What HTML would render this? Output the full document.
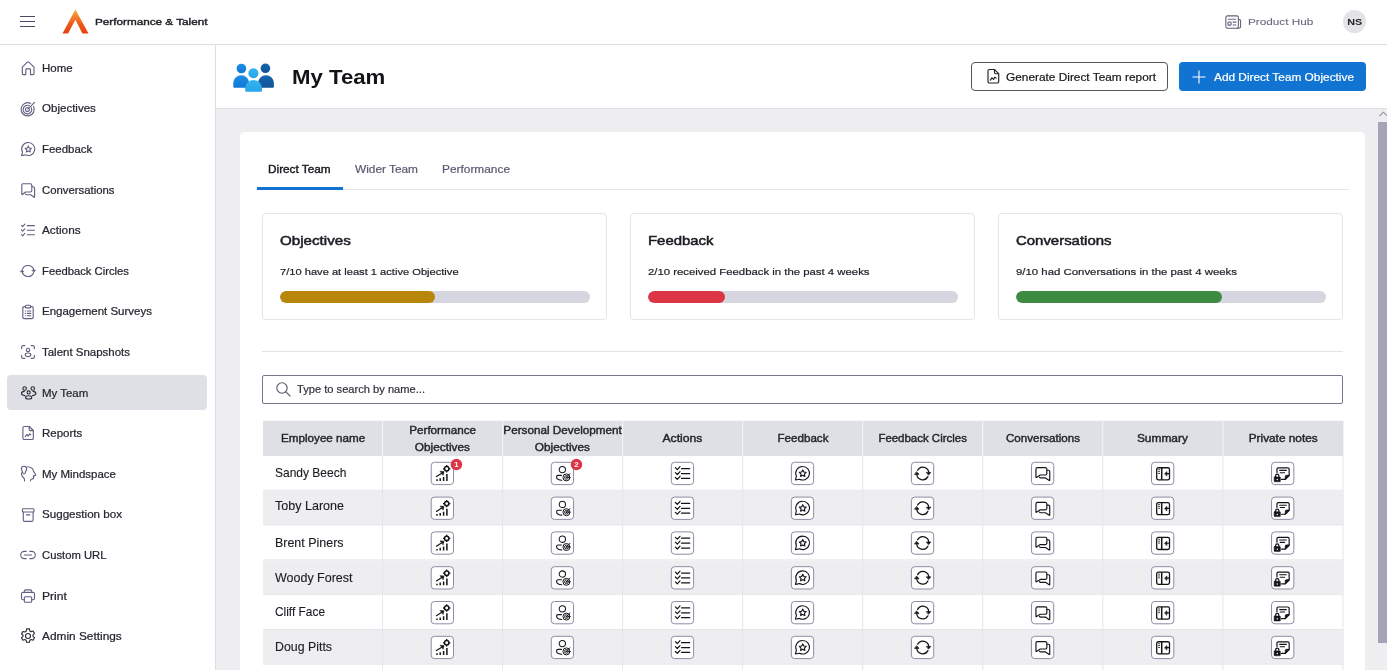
<!DOCTYPE html>
<html>
<head>
<meta charset="utf-8">
<title>My Team</title>
<style>
*{box-sizing:border-box;margin:0;padding:0}
html,body{width:1387px;height:670px;overflow:hidden;background:#fff}
body{font-family:"Liberation Sans",sans-serif;font-size:11.2px;color:#1f1f2b;position:relative}
.abs{position:absolute}
svg{display:block;overflow:visible}
/* top bar */
#topbar{position:absolute;left:0;top:0;width:1387px;height:45px;background:#fff;border-bottom:1px solid #dddde6}
#brand{position:absolute;left:94.7px;top:14.5px;font-size:9.6px;font-weight:400;color:#222228;-webkit-text-stroke:0.4px #222228;white-space:nowrap;line-height:14px}
#phub{position:absolute;left:1247.7px;top:14.6px;font-size:9.6px;color:#6a6a80;-webkit-text-stroke:0.1px;white-space:nowrap;line-height:14px}
#avatar{position:absolute;left:1343px;top:10px;width:23px;height:23px;border-radius:50%;background:#e3e3e8;font-size:10px;font-weight:700;color:#222;text-align:center;line-height:23px}
/* sidebar */
#side{position:absolute;left:0;top:45px;width:216px;height:625px;background:#fff;border-right:1px solid #dddde6}
.nav{position:absolute;left:7px;width:200px;height:34.5px;border-radius:4px}
.nav.sel{background:#dfe0e6;margin-top:-0.8px;height:35px}
.nav.sel svg{top:9.8px}.nav.sel .lb{top:10.8px}
.nav svg{position:absolute;left:12.7px;top:9.2px;width:16px;height:16px}
.nav .lb{position:absolute;left:35px;top:10px;line-height:14px;font-size:11.2px;color:#262630;white-space:nowrap;-webkit-text-stroke:0.22px #262630}
/* page header */
#phead{position:absolute;left:216px;top:45px;width:1171px;height:64px;background:#fff;border-bottom:1px solid #dddde6}
#title{position:absolute;left:292px;top:63px;font-size:21px;font-weight:700;color:#141418;line-height:28px;white-space:nowrap}
.btn{position:absolute;top:62px;height:29px;border-radius:4px;font-size:11.2px;line-height:27px;white-space:nowrap;-webkit-text-stroke:0.18px}
#b1{left:971px;width:197px;border:1px solid #55555f;background:#fff;color:#15151a}
#b2{left:1179px;width:187px;background:#1274d2;color:#fff}
/* content */
#content{position:absolute;left:216px;top:109px;width:1171px;height:561px;background:#eeeef1}
#card{position:absolute;left:240px;top:132px;width:1125px;height:560px;background:#fff;border-radius:4.5px}
.tab{position:absolute;top:162px;line-height:14px;font-size:11.2px;white-space:nowrap;color:#5a5a72;-webkit-text-stroke:0.2px}
#tabline{position:absolute;left:256px;top:189px;width:1093px;height:1px;background:#e4e4ea}
#tabsel{position:absolute;left:256.5px;top:187px;width:86.5px;height:3px;background:#1274d2}
.stat{position:absolute;top:213px;width:345px;height:107px;border:1px solid #e4e4ea;border-radius:4px;background:#fff}
.stat h3{position:absolute;left:16.5px;top:18.7px;font-size:13.3px;line-height:16px;font-weight:400;color:#1c1c24;-webkit-text-stroke:0.5px #1c1c24;white-space:nowrap}
.stat p{position:absolute;left:16.5px;top:51px;font-size:9.7px;line-height:13px;color:#22222c;-webkit-text-stroke:0.2px #22222c;white-space:nowrap}
.bar{position:absolute;left:16.5px;top:77px;width:310px;height:11.6px;border-radius:6px;background:#d6d6e1;overflow:hidden}
.bar i{display:block;height:11.6px;border-radius:6px}
#sep{position:absolute;left:262px;top:351px;width:1081px;height:1px;background:#e2e2e8}
#search{position:absolute;left:262px;top:375px;width:1081px;height:29px;border:1px solid #76768c;border-radius:2px;background:#fff}
#search .lb{position:absolute;left:34px;top:7px;font-size:10.6px;line-height:13px;color:#30303a;-webkit-text-stroke:0.2px;white-space:nowrap}
/* table */
#thead{position:absolute;left:263px;top:421px;width:1080px;height:35px;z-index:2}
.th{position:absolute;top:0;width:120.05px;height:35px;text-align:center;font-weight:400;font-size:10px;color:#24242c;-webkit-text-stroke:0.38px #24242c;line-height:17.2px;padding-top:1.2px;white-space:nowrap;border-left:1px solid transparent}
.th.one{line-height:35.6px;padding-top:0}
.row{position:absolute;left:263px;width:1080px;height:34.75px;background:#fff}
.row.alt{background:#efeff2}
.nm{position:absolute;left:275px;font-size:12.2px;line-height:14px;color:#1b1b22;white-space:nowrap;-webkit-text-stroke:0.12px #1b1b22}
.cell{position:absolute;top:0;width:120.05px;height:100%;border-left:1px solid #e2e2e8}
.ib{position:absolute;left:47.35px;top:5.9px;width:23.3px;height:23.3px;border:1px solid #8c8ca5;border-radius:3.5px;background:#fff}
.ib svg{position:absolute;left:-1px;top:-1px;width:23.3px;height:23.3px}
.badge{position:absolute;left:67.3px;top:2.7px;width:11.5px;height:11.5px;border-radius:50%;background:#dc3545;color:#fff;font-size:8px;font-weight:700;line-height:11.5px;text-align:center}
/* scrollbar */
#sb{position:absolute;left:1378px;top:109px;width:9px;height:561px;background:#eeeef1}
#sbt{position:absolute;left:1378px;top:122px;width:9px;height:521px;background:#a4a4b6}
</style>
</head>
<body>
<div id="root" style="position:absolute;left:0;top:0;width:1387px;height:670px;will-change:transform">
<div id="content"></div>
<div id="card"></div>

<div id="topbar">
  <svg class="abs" style="left:20px;top:15px" width="15" height="12" viewBox="0 0 15 12"><path d="M0 1.5h15M0 6.5h15M0 11.5h15" stroke="#4a4a66" stroke-width="1" fill="none"/></svg>
  <svg class="abs" style="left:62px;top:9px" width="27" height="25" viewBox="0 0 27 25"><defs><linearGradient id="lg" x1="0" y1="0" x2="0" y2="1"><stop offset="0" stop-color="#fcae3c"/><stop offset="0.300" stop-color="#f5812a"/><stop offset="0.600" stop-color="#ee5a1b"/><stop offset="1" stop-color="#e43f0e"/></linearGradient></defs><path d="M13.400 0.500L26.500 24.500H20.400L13.400 10.700L6.100 24.500H0.500Z" fill="url(#lg)"/></svg>
  <div id="brand"><span style="display:inline-block;font-size:9.6px;font-weight:400;transform:scaleX(1.2218);transform-origin:0 50%">Performance &amp; Talent</span></div>
  <svg class="abs" style="left:1224.5px;top:14.5px" width="17" height="14" viewBox="0 0 17 14" fill="none" stroke="#5e5e7a" stroke-width="1.050"><rect x="0.850" y="0.850" width="12.500" height="12.300" rx="1.600"/><path d="M13.400 4.600h1a1.200 1.200 0 0 1 1.200 1.200v5.600a1.800 1.800 0 0 1-1.800 1.800h-2"/><path d="M2.900 4.300h8.200" stroke="#8a8aa2" stroke-width="1.300"/><rect x="3" y="7" width="3.100" height="3.100" rx=".5"/><path d="M7.700 7.100h3.600M7.700 9.900h3.600"/></svg><div id="phub"><span style="display:inline-block;font-size:9.6px;font-weight:400;transform:scaleX(1.2245);transform-origin:0 50%">Product Hub</span></div>
  <div id="avatar"><span style="display:inline-block;font-size:9.8px;font-weight:700;transform:scaleX(1.1009);transform-origin:50% 50%">NS</span></div>
</div>

<div id="side"></div>
<div id="phead"></div>
<svg class="abs" style="left:233px;top:63px" width="42" height="29" viewBox="0 0 42 29">
<defs><linearGradient id="tg1" x1="0" y1="0" x2="0" y2="1"><stop offset="0" stop-color="#1e8fe6"/><stop offset="1" stop-color="#0f78d4"/></linearGradient>
<linearGradient id="tg2" x1="0" y1="0" x2="0" y2="1"><stop offset="0" stop-color="#1464ad"/><stop offset="1" stop-color="#0f5596"/></linearGradient>
<linearGradient id="tg3" x1="0" y1="0" x2="0" y2="1"><stop offset="0" stop-color="#35b5f2"/><stop offset="1" stop-color="#27a4ea"/></linearGradient></defs>
<circle cx="8.400" cy="5.500" r="4.800" fill="url(#tg1)"/><path d="M0.300 23.800v-3.700a7.900 7.900 0 0 1 15.800 0v3.700a1 1 0 0 1-1 1H1.300a1 1 0 0 1-1-1Z" fill="url(#tg1)"/>
<circle cx="32.400" cy="5.300" r="4.800" fill="url(#tg2)"/><path d="M25.100 23.800v-3.700a7.900 7.900 0 0 1 15.800 0v3.700a1 1 0 0 1-1 1H26.100a1 1 0 0 1-1-1Z" fill="url(#tg2)"/>
<circle cx="20.400" cy="10.300" r="5" fill="url(#tg3)"/><path d="M12.200 27.800v-2.300a8.400 8.400 0 0 1 16.800 0v2.300a1 1 0 0 1-1 1H13.200a1 1 0 0 1-1-1Z" fill="url(#tg3)"/>
</svg>
<div id="title"><span style="display:inline-block;font-size:21px;font-weight:700;transform:scaleX(1.0565);transform-origin:0 50%">My Team</span></div>

<div class="nav" style="top:50.75px;color:#606080"><svg viewBox="0 0 16 16" fill="none" stroke="currentColor" stroke-width="1.12" stroke-linecap="round" stroke-linejoin="round"><path d="M2.300 7.200L7.400 2.200a1.100 1.100 0 0 1 1.500 0L14 7.200V13.700a.9.900 0 0 1-.9.900H10.500V9.800a.9.900 0 0 0-.9-.9H6.700a.9.900 0 0 0-.9.900V14.600H3.200a.9.900 0 0 1-.9-.9Z"/></svg><span class="lb"><span style="display:inline-block;font-size:10.7px;font-weight:400;transform:scaleX(1.0731);transform-origin:0 50%">Home</span></span></div>
<div class="nav" style="top:91.35px;color:#606080"><svg viewBox="0 0 16 16" fill="none" stroke="currentColor" stroke-width="1.12" stroke-linecap="round" stroke-linejoin="round"><path d="M13.6 5.4A6.6 6.6 0 1 1 10.6 2.4"/><path d="M11.3 6.7A4.3 4.3 0 1 1 9.3 4.7"/><path d="M9.3 7.9A2 2 0 1 1 8.1 6.7"/><path d="M7.8 8.2L14.6 1.4"/></svg><span class="lb"><span style="display:inline-block;font-size:10.7px;font-weight:400;transform:scaleX(1.0800);transform-origin:0 50%">Objectives</span></span></div>
<div class="nav" style="top:131.95px;color:#606080"><svg viewBox="0 0 16 16" fill="none" stroke="currentColor" stroke-width="1.12" stroke-linecap="round" stroke-linejoin="round"><path d="M8.3 1.5a6.5 6.5 0 1 1-3 12.3L1.6 14.6l.9-3.5A6.5 6.5 0 0 1 8.3 1.5Z"/><path d="M8.3 5l.95 1.95 2.15.3-1.55 1.5.36 2.15L8.3 9.9l-1.9 1 .36-2.15L5.2 7.25l2.15-.3Z"/></svg><span class="lb"><span style="display:inline-block;font-size:10.7px;font-weight:400;transform:scaleX(1.0716);transform-origin:0 50%">Feedback</span></span></div>
<div class="nav" style="top:172.55px;color:#606080"><svg viewBox="0 0 16 16" fill="none" stroke="currentColor" stroke-width="1.12" stroke-linecap="round" stroke-linejoin="round"><path d="M2.700 1.800h7.600a1.500 1.500 0 0 1 1.500 1.500v5.200a1.500 1.500 0 0 1-1.500 1.500H5.600L2.300 12.500a.3.300 0 0 1-.5-.25V3.300A1.500 1.500 0 0 1 2.700 1.800Z"/><path d="M12 4.800h1.100a1.500 1.500 0 0 1 1.500 1.500v8.700a.3.300 0 0 1-.5.250L10.800 12.800H6.700a1.500 1.500 0 0 1-1.400-.9"/></svg><span class="lb"><span style="display:inline-block;font-size:10.7px;font-weight:400;transform:scaleX(1.0611);transform-origin:0 50%">Conversations</span></span></div>
<div class="nav" style="top:213.15px;color:#606080"><svg viewBox="0 0 16 16" fill="none" stroke="currentColor" stroke-width="1.12" stroke-linecap="round" stroke-linejoin="round"><path d="M1.5 3.4l1.2 1.2 2.1-2.4M1.5 8l1.2 1.2 2.1-2.4M1.5 12.6l1.2 1.2 2.1-2.4M7.2 3.6h7.3M7.2 8.2h7.3M7.2 12.8h7.3"/></svg><span class="lb"><span style="display:inline-block;font-size:10.7px;font-weight:400;transform:scaleX(1.1009);transform-origin:0 50%">Actions</span></span></div>
<div class="nav" style="top:253.75px;color:#606080"><svg viewBox="0 0 16 16" fill="none" stroke="currentColor" stroke-width="1.12" stroke-linecap="round" stroke-linejoin="round"><path d="M2.400 6.300A6 6 0 0 1 13.900 7.600"/><path d="M13.600 9.700A6 6 0 0 1 2.100 8.400"/><path d="M12.200 7.100h3.400l-1.700 2.100Z" fill="currentColor" stroke-width=".5"/><path d="M.4 8.900h3.400l-1.700-2.100Z" fill="currentColor" stroke-width=".5"/></svg><span class="lb"><span style="display:inline-block;font-size:10.7px;font-weight:400;transform:scaleX(1.0537);transform-origin:0 50%">Feedback Circles</span></span></div>
<div class="nav" style="top:294.35px;color:#606080"><svg viewBox="0 0 16 16" fill="none" stroke="currentColor" stroke-width="1.12" stroke-linecap="round" stroke-linejoin="round"><path d="M5.4 2.6H4.1a1.3 1.3 0 0 0-1.3 1.3v9.4a1.3 1.3 0 0 0 1.3 1.3h7.8a1.3 1.3 0 0 0 1.3-1.3V3.9a1.3 1.3 0 0 0-1.3-1.3h-1.3"/><rect x="5.4" y="1.3" width="5.2" height="2.6" rx="1"/><path d="M5.3 7h.2M7.3 7h3.5M5.3 9.4h.2M7.3 9.4h3.5M5.3 11.8h.2M7.3 11.8h3.5"/></svg><span class="lb"><span style="display:inline-block;font-size:10.7px;font-weight:400;transform:scaleX(1.0765);transform-origin:0 50%">Engagement Surveys</span></span></div>
<div class="nav" style="top:334.95px;color:#606080"><svg viewBox="0 0 16 16" fill="none" stroke="currentColor" stroke-width="1.12" stroke-linecap="round" stroke-linejoin="round"><path d="M1.6 4.8V3.1a1.5 1.5 0 0 1 1.5-1.5h1.7M11.2 1.6h1.7a1.5 1.5 0 0 1 1.5 1.5v1.7M14.4 11.2v1.7a1.5 1.5 0 0 1-1.5 1.5h-1.7M4.8 14.4H3.1a1.5 1.5 0 0 1-1.5-1.5v-1.7"/><circle cx="8" cy="5.9" r="1.7"/><path d="M5.2 10.8c0-1.1 1.2-1.8 2.8-1.8s2.8.7 2.8 1.8-1.2 1.8-2.8 1.8-2.8-.7-2.8-1.8Z"/></svg><span class="lb"><span style="display:inline-block;font-size:10.7px;font-weight:400;transform:scaleX(1.0732);transform-origin:0 50%">Talent Snapshots</span></span></div>
<div class="nav sel" style="top:375.55px;color:#2a2a36"><svg viewBox="0 0 16 16" fill="none" stroke="currentColor" stroke-width="1.12" stroke-linecap="round" stroke-linejoin="round"><circle cx="4.600" cy="3.450" r="1.750"/><circle cx="12.750" cy="3.450" r="1.750"/><circle cx="8.650" cy="7.450" r="1.550"/><ellipse cx="8.650" cy="12.400" rx="3.050" ry="1.650"/><path d="M4.300 6.400C2.600 6.500 1.500 7.400 1.500 8.500c0 1.100 1.300 1.900 3.300 2.100M13 6.400c1.700.1 2.800 1 2.800 2.100 0 1.100-1.300 1.900-3.300 2.100"/></svg><span class="lb"><span style="display:inline-block;font-size:10.7px;font-weight:400;transform:scaleX(1.0728);transform-origin:0 50%">My Team</span></span></div>
<div class="nav" style="top:416.15px;color:#606080"><svg viewBox="0 0 16 16" fill="none" stroke="currentColor" stroke-width="1.12" stroke-linecap="round" stroke-linejoin="round"><path d="M4.200 1.500h5.100l4 4v7.700a1.300 1.300 0 0 1-1.300 1.300H4.200a1.300 1.300 0 0 1-1.300-1.300V2.800a1.300 1.300 0 0 1 1.300-1.300Z"/><path d="M9.200 1.700v2.700a1.200 1.200 0 0 0 1.200 1.200h2.700"/><path d="M5.200 11.800l1.600-2.300 1.500 1.500 1.300-2.100 1.200.9"/></svg><span class="lb"><span style="display:inline-block;font-size:10.7px;font-weight:400;transform:scaleX(1.0765);transform-origin:0 50%">Reports</span></span></div>
<div class="nav" style="top:456.75px;color:#606080"><svg viewBox="0 0 16 16" fill="none" stroke="currentColor" stroke-width="1.12" stroke-linecap="round" stroke-linejoin="round"><path d="M4 .3c1.500 0 2.600 1.100 2.600 2.600 0 1.100-.6 1.800-1 2.600l-.4 1.500c-.1.600-.6 1-1.200 1s-1.100-.4-1.200-1l-.4-1.500c-.4-.8-1-1.500-1-2.600C1.400 1.400 2.500.3 4 .3Z"/><path d="M7.200.8c2 0 3.600.5 4.700 1.400 1.100 1 1.400 2.100 1.700 3.200l2 3.100c.2.400 0 .8-.4.900l-1.600.5c-.3.100-.4.400-.3.700l.4 1.100c.1.400-.1.800-.5.900l-1.900.6c-.5.200-.8.600-.8 1.100v.5"/><path d="M1.500 6.700c-.1 1.300.1 2.400.6 3.300.5.900 1.500 1.700 2 2.400.3.400.4.900.4 1.400v1.100"/></svg><span class="lb"><span style="display:inline-block;font-size:10.7px;font-weight:400;transform:scaleX(1.0739);transform-origin:0 50%">My Mindspace</span></span></div>
<div class="nav" style="top:497.35px;color:#606080"><svg viewBox="0 0 16 16" fill="none" stroke="currentColor" stroke-width="1.12" stroke-linecap="round" stroke-linejoin="round"><rect x="2.400" y="1.700" width="11.600" height="3.300" rx=".8"/><path d="M3.300 5.100v7.900a1.400 1.400 0 0 0 1.400 1.400h7a1.400 1.400 0 0 0 1.400-1.400V5.100M6.500 7.900h3.400"/></svg><span class="lb"><span style="display:inline-block;font-size:10.7px;font-weight:400;transform:scaleX(1.0857);transform-origin:0 50%">Suggestion box</span></span></div>
<div class="nav" style="top:537.95px;color:#606080"><svg viewBox="0 0 16 16" fill="none" stroke="currentColor" stroke-width="1.12" stroke-linecap="round" stroke-linejoin="round"><path d="M6.200 4.400H4.300a3.600 3.600 0 0 0 0 7.200h1.900M9.800 4.400h1.900a3.600 3.600 0 0 1 0 7.200H9.800M4.400 8h7.200"/></svg><span class="lb"><span style="display:inline-block;font-size:10.7px;font-weight:400;transform:scaleX(1.0528);transform-origin:0 50%">Custom URL</span></span></div>
<div class="nav" style="top:578.55px;color:#606080"><svg viewBox="0 0 16 16" fill="none" stroke="currentColor" stroke-width="1.12" stroke-linecap="round" stroke-linejoin="round"><path d="M4.300 4.400V3.300a1.400 1.400 0 0 1 1.400-1.400h4.600a1.400 1.400 0 0 1 1.400 1.400v1.100"/><path d="M4.300 11.800H3a1.500 1.500 0 0 1-1.500-1.500V5.900A1.500 1.500 0 0 1 3 4.400h10a1.500 1.500 0 0 1 1.500 1.500v4.400a1.500 1.500 0 0 1-1.500 1.500h-1.300"/><rect x="4.300" y="8.800" width="7.400" height="5.400" rx="1"/></svg><span class="lb"><span style="display:inline-block;font-size:10.7px;font-weight:400;transform:scaleX(1.1326);transform-origin:0 50%">Print</span></span></div>
<div class="nav" style="top:619.15px;color:#2a2a36"><svg viewBox="0 0 16 16" fill="none" stroke="currentColor" stroke-width="1.12" stroke-linecap="round" stroke-linejoin="round"><circle cx="8" cy="8" r="2.500"/><path d="M6.600 .9h2.800l.45 2 1.300.75 1.950-.62 1.400 2.420-1.500 1.400v1.500l1.500 1.400-1.400 2.420-1.950-.62-1.300.75-.45 2H6.600l-.45-2-1.300-.75-1.950.62-1.400-2.420 1.500-1.400V7.250l-1.500-1.400 1.400-2.420 1.950.62 1.300-.75Z"/></svg><span class="lb"><span style="display:inline-block;font-size:10.7px;font-weight:400;transform:scaleX(1.1100);transform-origin:0 50%">Admin Settings</span></span></div>
<div class="btn" id="b1"><span class="abs" style="left:12.500px;top:5.200px;width:16.500px;height:17px;color:#222"><svg viewBox="0 0 16 16" fill="none" stroke="currentColor" stroke-width="1.12" stroke-linecap="round" stroke-linejoin="round"><path d="M4.200 1.500h5.100l4 4v7.700a1.300 1.300 0 0 1-1.300 1.300H4.200a1.300 1.300 0 0 1-1.300-1.300V2.800a1.300 1.300 0 0 1 1.300-1.300Z"/><path d="M9.200 1.700v2.700a1.200 1.200 0 0 0 1.200 1.200h2.700"/><path d="M5.200 11.800l1.600-2.300 1.500 1.500 1.300-2.100 1.200.9"/></svg></span><span class="abs" style="left:34px;top:0.600px"><span style="display:inline-block;font-size:10.1px;font-weight:400;transform:scaleX(1.1743);transform-origin:0 50%">Generate Direct Team report</span></span></div>
<div class="btn" id="b2"><svg class="abs" style="left:13px;top:8px" width="14" height="14" viewBox="0 0 14 14"><path d="M7 0.500v13M0.500 7h13" stroke="#fff" stroke-width="1.100" fill="none"/></svg><span class="abs" style="left:35px;top:2.200px"><span style="display:inline-block;font-size:10.1px;font-weight:400;transform:scaleX(1.1734);transform-origin:0 50%">Add Direct Team Objective</span></span></div>
<div class="tab" style="left:268px;color:#15151b;-webkit-text-stroke:0.35px"><span style="display:inline-block;font-size:10.7px;font-weight:400;transform:scaleX(1.1033);transform-origin:0 50%">Direct Team</span></div>
<div class="tab" style="left:355px"><span style="display:inline-block;font-size:10.7px;font-weight:400;transform:scaleX(1.1086);transform-origin:0 50%">Wider Team</span></div>
<div class="tab" style="left:442px"><span style="display:inline-block;font-size:10.7px;font-weight:400;transform:scaleX(1.1113);transform-origin:0 50%">Performance</span></div>
<div id="tabline"></div><div id="tabsel"></div>
<div class="stat" style="left:262px"><h3><span style="display:inline-block;font-size:12.7px;font-weight:400;transform:scaleX(1.1936);transform-origin:0 50%">Objectives</span></h3><p><span style="display:inline-block;font-size:9.7px;font-weight:400;transform:scaleX(1.1475);transform-origin:0 50%">7/10 have at least 1 active Objective</span></p><div class="bar"><i style="width:155px;background:#b8860b"></i></div></div>
<div class="stat" style="left:630px"><h3><span style="display:inline-block;font-size:12.7px;font-weight:400;transform:scaleX(1.1755);transform-origin:0 50%">Feedback</span></h3><p><span style="display:inline-block;font-size:9.7px;font-weight:400;transform:scaleX(1.1718);transform-origin:0 50%">2/10 received Feedback in the past 4 weeks</span></p><div class="bar"><i style="width:77px;background:#dc3545"></i></div></div>
<div class="stat" style="left:998px"><h3><span style="display:inline-block;font-size:12.7px;font-weight:400;transform:scaleX(1.1774);transform-origin:0 50%">Conversations</span></h3><p><span style="display:inline-block;font-size:9.7px;font-weight:400;transform:scaleX(1.1758);transform-origin:0 50%">9/10 had Conversations in the past 4 weeks</span></p><div class="bar"><i style="width:206px;background:#3d8b40"></i></div></div>
<div id="sep"></div>
<div id="search"><svg class="abs" style="left:13px;top:6px" width="15" height="15" viewBox="0 0 15 15"><circle cx="6" cy="6" r="5.200" stroke="#55556a" stroke-width="1.100" fill="none"/><path d="M9.900 9.900L14 14" stroke="#55556a" stroke-width="1.100" stroke-linecap="round"/></svg><span class="lb"><span style="display:inline-block;font-size:10.6px;font-weight:400;transform:scaleX(1.0501);transform-origin:0 50%">Type to search by name...</span></span></div>
<div id="thead"><div class="th one" style="left:0px;border-left:none;"><span style="display:inline-block;font-size:10px;font-weight:400;transform:scaleX(1.1665);transform-origin:50% 50%">Employee name</span></div><div class="th" style="left:119.0px;"><span style="display:inline-block;font-size:10px;font-weight:400;transform:scaleX(1.1668);transform-origin:50% 50%">Performance</span><br><span style="display:inline-block;font-size:10px;font-weight:400;transform:scaleX(1.1823);transform-origin:50% 50%">Objectives</span></div><div class="th" style="left:239.05px;"><span style="display:inline-block;font-size:10px;font-weight:400;transform:scaleX(1.1713);transform-origin:50% 50%">Personal Development</span><br><span style="display:inline-block;font-size:10px;font-weight:400;transform:scaleX(1.1823);transform-origin:50% 50%">Objectives</span></div><div class="th one" style="left:359.1px;"><span style="display:inline-block;font-size:10px;font-weight:400;transform:scaleX(1.2196);transform-origin:50% 50%">Actions</span></div><div class="th one" style="left:479.15px;"><span style="display:inline-block;font-size:10px;font-weight:400;transform:scaleX(1.1612);transform-origin:50% 50%">Feedback</span></div><div class="th one" style="left:599.2px;"><span style="display:inline-block;font-size:10px;font-weight:400;transform:scaleX(1.1454);transform-origin:50% 50%">Feedback Circles</span></div><div class="th one" style="left:719.25px;"><span style="display:inline-block;font-size:10px;font-weight:400;transform:scaleX(1.1577);transform-origin:50% 50%">Conversations</span></div><div class="th one" style="left:839.3px;"><span style="display:inline-block;font-size:10px;font-weight:400;transform:scaleX(1.1917);transform-origin:50% 50%">Summary</span></div><div class="th one" style="left:959.35px;"><span style="display:inline-block;font-size:10px;font-weight:400;transform:scaleX(1.1820);transform-origin:50% 50%">Private notes</span></div></div>
<svg class="abs" style="left:0;top:0" width="1387" height="670" viewBox="0 0 1387 670"><defs><g id="i_perf"><rect x=".5" y=".5" width="22.3" height="22.3" rx="3.300" fill="#fff" stroke="#8c8ca5" stroke-width="1"/><g fill="none" stroke="#141418" stroke-width="1.25" stroke-linecap="round" stroke-linejoin="round"><path d="M6.300 17.500v1.600M9.500 16.400v2.700M12.900 15.200v3.900M16.200 12.200v6.900" stroke-width="1.500" stroke-linecap="butt"/><path d="M5.700 14.800L12.300 10.600" stroke-width="1.150"/><path d="M9.700 9.500l3.500.300-.7 3.400Z" fill="#141418" stroke-width=".6"/><circle cx="16" cy="7" r="2.200" stroke-width="1.500"/><path d="M16 3.300v1.200M16 9.500v1.200M12.300 7h1.200M18.500 7h1.200" stroke-width="1.300" stroke-linecap="butt"/></g></g><g id="i_pdev"><rect x=".5" y=".5" width="22.3" height="22.3" rx="3.300" fill="#fff" stroke="#8c8ca5" stroke-width="1"/><g fill="none" stroke="#141418" stroke-width="1.25" stroke-linecap="round" stroke-linejoin="round"><circle cx="11.600" cy="7.800" r="3.150" stroke-width="1.050"/><path d="M10.700 13.600H7.400c-1 0-1.600.600-1.600 1.500 0 1.300.600 2.200 1.800 2.700 1 .400 2.200.600 3.400.700" stroke-width="1.100"/><circle cx="15.700" cy="15.600" r="3.500" stroke-width="1"/><circle cx="15.700" cy="15.600" r="1.900" stroke-width=".9"/><circle cx="15.700" cy="15.600" r=".6" fill="#141418" stroke-width=".5"/><path d="M15.700 15.600L19.200 11.900" stroke-width=".9"/></g></g><g id="i_actions"><rect x=".5" y=".5" width="22.3" height="22.3" rx="3.300" fill="#fff" stroke="#8c8ca5" stroke-width="1"/><g fill="none" stroke="#141418" stroke-width="1.25" stroke-linecap="round" stroke-linejoin="round"><path d="M4.600 5.900l1.900 1.900 2.700-2.900M4.600 10.800l1.900 1.900 2.700-2.900M4.600 15.700l1.900 1.900 2.700-2.900" stroke-width="1.200"/><path d="M10.700 6.800h8.200M10.700 11.750h8.200M10.700 16.600h8.200" stroke-width="1.250"/></g></g><g id="i_feedback"><rect x=".5" y=".5" width="22.3" height="22.3" rx="3.300" fill="#fff" stroke="#8c8ca5" stroke-width="1"/><g fill="none" stroke="#141418" stroke-width="1.25" stroke-linecap="round" stroke-linejoin="round"><path d="M11.900 4.700a6.750 6.750 0 1 1-3.200 12.700L4.600 18.200l.95-3.900A6.750 6.750 0 0 1 11.900 4.700Z" stroke-width="1.100"/><path d="M11.900 8.100l1.050 2.150 2.350.340-1.700 1.660.4 2.350-2.100-1.100-2.100 1.100.4-2.350-1.700-1.660 2.350-.340Z" stroke-width="1.150"/></g></g><g id="i_circles"><rect x=".5" y=".5" width="22.3" height="22.3" rx="3.300" fill="#fff" stroke="#8c8ca5" stroke-width="1"/><g fill="none" stroke="#141418" stroke-width="1.25" stroke-linecap="round" stroke-linejoin="round"><path d="M6.700 8.400A5.900 5.900 0 0 1 17.800 11.300" stroke-width="1.250"/><path d="M17 14.800A5.900 5.900 0 0 1 5.900 11.900" stroke-width="1.250"/><path d="M15.700 10.600h4.200l-2.100 2.500Z" fill="#141418" stroke-width=".7"/><path d="M3.900 12.600h4.200L5.900 10.100Z" fill="#141418" stroke-width=".7"/></g></g><g id="i_conv"><rect x=".5" y=".5" width="22.3" height="22.3" rx="3.300" fill="#fff" stroke="#8c8ca5" stroke-width="1"/><g fill="none" stroke="#141418" stroke-width="1.25" stroke-linecap="round" stroke-linejoin="round"><path d="M6.400 5.800h8a1.500 1.500 0 0 1 1.500 1.500v4.400a1.500 1.500 0 0 1-1.500 1.500H9.300L5.500 15.600a.3.300 0 0 1-.5-.3V7.300A1.500 1.500 0 0 1 6.400 5.800Z" stroke-width="1.150"/><path d="M16 8.500h1.400a1.400 1.400 0 0 1 1.400 1.400v8.500a.3.300 0 0 1-.5.250L14.500 16.100H9.700a1.400 1.400 0 0 1-1.200-.7" stroke-width="1.150"/></g></g><g id="i_summary"><rect x=".5" y=".5" width="22.3" height="22.3" rx="3.300" fill="#fff" stroke="#8c8ca5" stroke-width="1"/><g fill="none" stroke="#141418" stroke-width="1.25" stroke-linecap="round" stroke-linejoin="round"><rect x="5.700" y="5.950" width="12.800" height="12.150" rx="1.700" stroke-width="1.300"/><path d="M10.700 6v12" stroke-width="1.500" stroke-linecap="butt"/><path d="M7.300 7.950h1.500M7.300 9.800h1.500M7.300 11.700h1.500" stroke-width="1" stroke-linecap="butt"/><path d="M18 11.850h-2.500" stroke-width="1.200"/><path d="M13.700 11.850l2.200-2.100v4.200Z" fill="#141418" stroke-width=".6"/></g></g><g id="i_notes"><rect x=".5" y=".5" width="22.3" height="22.3" rx="3.300" fill="#fff" stroke="#8c8ca5" stroke-width="1"/><g fill="none" stroke="#141418" stroke-width="1.25" stroke-linecap="round" stroke-linejoin="round"><path d="M5.900 10.800V7.300a1.300 1.300 0 0 1 1.300-1.300h9.600a1.300 1.300 0 0 1 1.300 1.300v6.500l-3.900 3.850H10.400" stroke-width="1.200"/><path d="M18 13.500h-2.400a1.400 1.400 0 0 0-1.400 1.400v2.600Z" fill="#141418" stroke-width=".8"/><path d="M8.600 8.600h6.700M9.100 10.950h4.500" stroke-width="1.050"/><rect x="3.100" y="15.100" width="6.200" height="4.900" rx=".5" fill="#141418" stroke-width=".5"/><path d="M4.600 15v-1a1.600 1.600 0 0 1 3.200 0v1" stroke-width="1.250"/><circle cx="6.200" cy="17.800" r=".75" fill="#fff" stroke="none"/></g></g></defs><rect x="263" y="420.700" width="1080.400" height="35.300" fill="#dfe0e6"/><rect x="382.00" y="420.700" width="1" height="35.300" fill="#f6f6f9"/><rect x="502.05" y="420.700" width="1" height="35.300" fill="#f6f6f9"/><rect x="622.10" y="420.700" width="1" height="35.300" fill="#f6f6f9"/><rect x="742.15" y="420.700" width="1" height="35.300" fill="#f6f6f9"/><rect x="862.20" y="420.700" width="1" height="35.300" fill="#f6f6f9"/><rect x="982.25" y="420.700" width="1" height="35.300" fill="#f6f6f9"/><rect x="1102.30" y="420.700" width="1" height="35.300" fill="#f6f6f9"/><rect x="1222.35" y="420.700" width="1" height="35.300" fill="#f6f6f9"/><rect x="263" y="456.00" width="1080.4" height="34.8" fill="#fff"/><rect x="263" y="489.80" width="1080.4" height="1" fill="#e6e6ec"/><rect x="263" y="490.80" width="1080.4" height="34.8" fill="#eeeef1"/><rect x="263" y="524.60" width="1080.4" height="1" fill="#e6e6ec"/><rect x="263" y="525.60" width="1080.4" height="34.8" fill="#fff"/><rect x="263" y="559.40" width="1080.4" height="1" fill="#e6e6ec"/><rect x="263" y="560.40" width="1080.4" height="34.8" fill="#eeeef1"/><rect x="263" y="594.20" width="1080.4" height="1" fill="#e6e6ec"/><rect x="263" y="595.20" width="1080.4" height="34.8" fill="#fff"/><rect x="263" y="629.00" width="1080.4" height="1" fill="#e6e6ec"/><rect x="263" y="630.00" width="1080.4" height="34.8" fill="#eeeef1"/><rect x="263" y="663.80" width="1080.4" height="1" fill="#e6e6ec"/><rect x="263" y="664.80" width="1080.4" height="34.8" fill="#fff"/><rect x="263" y="698.60" width="1080.4" height="1" fill="#e6e6ec"/><rect x="382.00" y="456.0" width="1" height="214" fill="#e6e6ec"/><rect x="502.05" y="456.0" width="1" height="214" fill="#e6e6ec"/><rect x="622.10" y="456.0" width="1" height="214" fill="#e6e6ec"/><rect x="742.15" y="456.0" width="1" height="214" fill="#e6e6ec"/><rect x="862.20" y="456.0" width="1" height="214" fill="#e6e6ec"/><rect x="982.25" y="456.0" width="1" height="214" fill="#e6e6ec"/><rect x="1102.30" y="456.0" width="1" height="214" fill="#e6e6ec"/><rect x="1222.35" y="456.0" width="1" height="214" fill="#e6e6ec"/><rect x="1342.40" y="456.0" width="1" height="214" fill="#e6e6ec"/><use href="#i_perf" x="430.70" y="461.80"/><use href="#i_pdev" x="550.75" y="461.80"/><use href="#i_actions" x="670.80" y="461.80"/><use href="#i_feedback" x="790.85" y="461.80"/><use href="#i_circles" x="910.90" y="461.80"/><use href="#i_conv" x="1030.95" y="461.80"/><use href="#i_summary" x="1151.00" y="461.80"/><use href="#i_notes" x="1271.05" y="461.80"/><use href="#i_perf" x="430.70" y="496.60"/><use href="#i_pdev" x="550.75" y="496.60"/><use href="#i_actions" x="670.80" y="496.60"/><use href="#i_feedback" x="790.85" y="496.60"/><use href="#i_circles" x="910.90" y="496.60"/><use href="#i_conv" x="1030.95" y="496.60"/><use href="#i_summary" x="1151.00" y="496.60"/><use href="#i_notes" x="1271.05" y="496.60"/><use href="#i_perf" x="430.70" y="531.40"/><use href="#i_pdev" x="550.75" y="531.40"/><use href="#i_actions" x="670.80" y="531.40"/><use href="#i_feedback" x="790.85" y="531.40"/><use href="#i_circles" x="910.90" y="531.40"/><use href="#i_conv" x="1030.95" y="531.40"/><use href="#i_summary" x="1151.00" y="531.40"/><use href="#i_notes" x="1271.05" y="531.40"/><use href="#i_perf" x="430.70" y="566.20"/><use href="#i_pdev" x="550.75" y="566.20"/><use href="#i_actions" x="670.80" y="566.20"/><use href="#i_feedback" x="790.85" y="566.20"/><use href="#i_circles" x="910.90" y="566.20"/><use href="#i_conv" x="1030.95" y="566.20"/><use href="#i_summary" x="1151.00" y="566.20"/><use href="#i_notes" x="1271.05" y="566.20"/><use href="#i_perf" x="430.70" y="601.00"/><use href="#i_pdev" x="550.75" y="601.00"/><use href="#i_actions" x="670.80" y="601.00"/><use href="#i_feedback" x="790.85" y="601.00"/><use href="#i_circles" x="910.90" y="601.00"/><use href="#i_conv" x="1030.95" y="601.00"/><use href="#i_summary" x="1151.00" y="601.00"/><use href="#i_notes" x="1271.05" y="601.00"/><use href="#i_perf" x="430.70" y="635.80"/><use href="#i_pdev" x="550.75" y="635.80"/><use href="#i_actions" x="670.80" y="635.80"/><use href="#i_feedback" x="790.85" y="635.80"/><use href="#i_circles" x="910.90" y="635.80"/><use href="#i_conv" x="1030.95" y="635.80"/><use href="#i_summary" x="1151.00" y="635.80"/><use href="#i_notes" x="1271.05" y="635.80"/><circle cx="456.4" cy="464.5" r="5.750" fill="#dc3545"/><text x="456.4" y="467.300" font-family="Liberation Sans" font-size="7.800" font-weight="700" fill="#fff" text-anchor="middle">1</text><circle cx="576.4499999999999" cy="464.5" r="5.750" fill="#dc3545"/><text x="576.4499999999999" y="467.300" font-family="Liberation Sans" font-size="7.800" font-weight="700" fill="#fff" text-anchor="middle">2</text></svg>
<div class="nm" style="top:465.97px"><span style="display:inline-block;font-size:12.2px;font-weight:400;transform:scaleX(0.9846);transform-origin:0 50%">Sandy Beech</span></div>
<div class="nm" style="top:498.57px"><span style="display:inline-block;font-size:12.2px;font-weight:400;transform:scaleX(1.0287);transform-origin:0 50%">Toby Larone</span></div>
<div class="nm" style="top:536.27px"><span style="display:inline-block;font-size:12.2px;font-weight:400;transform:scaleX(1.0214);transform-origin:0 50%">Brent Piners</span></div>
<div class="nm" style="top:570.77px"><span style="display:inline-block;font-size:12.2px;font-weight:400;transform:scaleX(1.0246);transform-origin:0 50%">Woody Forest</span></div>
<div class="nm" style="top:605.27px"><span style="display:inline-block;font-size:12.2px;font-weight:400;transform:scaleX(0.9756);transform-origin:0 50%">Cliff Face</span></div>
<div class="nm" style="top:639.77px"><span style="display:inline-block;font-size:12.2px;font-weight:400;transform:scaleX(1.0136);transform-origin:0 50%">Doug Pitts</span></div>
<div id="sb"></div><div id="sbt"></div>
<svg class="abs" style="left:1377px;top:109px" width="10" height="10" viewBox="0 0 10 10"><path d="M2.300 7.200L6.400 3.100L10.500 7.200" stroke="#5a5a70" stroke-width="0.900" fill="none"/></svg>
</div>
</body>
</html>
